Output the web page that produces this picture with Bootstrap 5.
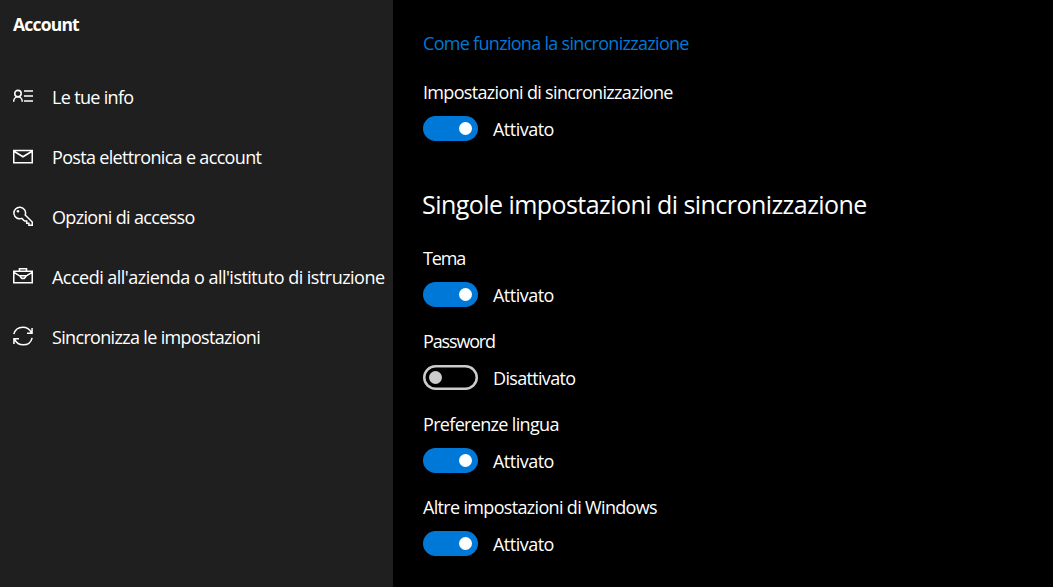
<!DOCTYPE html>
<html lang="it">
<head>
    <meta charset="UTF-8">
    <meta name="viewport" content="width=device-width, initial-scale=1.0">
    <title>Account - Sincronizza le impostazioni</title>
    <link rel="stylesheet" href="https://cdn.jsdelivr.net/npm/bootstrap@5.3.0/dist/css/bootstrap.min.css">
    <style>
        body {
            background-color: #000;
            color: #fff;
            font-family: "Segoe UI", "Open Sans", "Noto Sans", sans-serif;
            font-size: 18px;
            line-height: 24px;
            letter-spacing: -0.67px;
        }
        .sidebar {
            width: 393px;
            background-color: #1f1f1f;
            padding: 12px 0 0 13px;
        }
        .sidebar-title {
            font-size: 17.5px;
            line-height: 24px;
            font-weight: 700;
            letter-spacing: -0.8px;
            margin-bottom: 31px;
        }
        .side-link {
            height: 60px;
            color: #fff;
            gap: 19px;
        }
        .side-link svg {
            width: 20px;
            height: 20px;
            margin-top: -2px;
            fill: none;
            stroke: #fff;
            stroke-width: 1.6;
        }
        .content {
            padding: 31px 0 0 30px;
        }
        .help-link {
            color: #0078d7;
            letter-spacing: -0.7px;
            margin-bottom: 25px;
        }
        .section-title {
            font-size: 25px;
            line-height: 32px;
            letter-spacing: -0.55px;
            margin: 47px 0 26px -1px;
        }
        .setting + .setting {
            margin-top: 22px;
        }
        .setting-row {
            height: 25px;
            margin-top: 12px;
            gap: 15px;
        }
        .switch {
            width: 55px;
            height: 25px;
            padding: 0 6px;
            background-color: #0078d7;
        }
        .switch .knob {
            width: 13px;
            height: 13px;
            background-color: #fff;
        }
        .switch.off {
            background-color: transparent;
            box-shadow: inset 0 0 0 2.5px #ccc;
        }
        .switch.off .knob {
            background-color: #ccc;
        }
        .spacing-wide {
            letter-spacing: -0.52px;
        }
        .spacing-tight {
            letter-spacing: -1.15px;
        }
    </style>
</head>
<body>
    <div class="d-flex vh-100 overflow-hidden">
        <nav class="sidebar flex-shrink-0">
            <h1 class="sidebar-title"><span>Account</span></h1>
            <a href="#" class="side-link d-flex align-items-center text-decoration-none text-nowrap">
                <svg viewBox="0 0 21 21" class="flex-shrink-0"><circle cx="5.2" cy="8" r="3.4"/><path d="M.7 16.6c0-3 2-5.200 4.500-5.200s4.500 2.200 4.500 5.200M11.500 5.200h9.500M11.500 10.400h9.500M11.500 15.700h9.500"/></svg>
                <span>Le tue info</span>
            </a>
            <a href="#" class="side-link d-flex align-items-center text-decoration-none text-nowrap">
                <svg viewBox="0 0 21 21" class="flex-shrink-0"><path d="M.8 4.800h19.400v12.700H.8zM1 5.500l9.500 5.800L20 5.500"/></svg>
                <span>Posta elettronica e account</span>
            </a>
            <a href="#" class="side-link d-flex align-items-center text-decoration-none text-nowrap">
                <svg viewBox="0 0 21 21" class="flex-shrink-0"><path d="M12.800 9.400l7.400 7.400v3.500h-3.500v-2.300h-2.300v-2.300h-2.300l-2.800-2.700A6.100 6.100 0 1 1 12.800 9.400z"/><circle cx="5.200" cy="5.500" r="1.300" fill="#fff" stroke="none"/></svg>
                <span>Opzioni di accesso</span>
            </a>
            <a href="#" class="side-link d-flex align-items-center text-decoration-none text-nowrap">
                <svg viewBox="0 0 21 21" class="flex-shrink-0"><path d="M.8 5.500h19.400v12H.8zM6.800 5.200V2.900h7.400v2.300M1 6.700l6.800 4.300M20 6.700L13.200 11M7.800 10.200h5.400v1.300l-1.500 1.500H9.300l-1.500-1.500z"/></svg>
                <span class="spacing-wide">Accedi all'azienda o all'istituto di istruzione</span>
            </a>
            <a href="#" class="side-link d-flex align-items-center text-decoration-none text-nowrap">
                <svg viewBox="0 0 21 21" class="flex-shrink-0"><path d="M.9 8.600C2 4 5.800 1.200 10.300 1.200c4 0 7.300 2.200 9 5.800M20 2.200v5.300h-5.300M20.100 12.400c-1.100 4.600-4.900 7.400-9.400 7.400-4 0-7.300-2.200-9-5.800M1 18.800v-5.300h5.300"/></svg>
                <span>Sincronizza le impostazioni</span>
            </a>
        </nav>

        <main class="content flex-grow-1">
            <div class="help-link"><span>Come funziona la sincronizzazione</span></div>
            <div class="setting">
                <div><span>Impostazioni di sincronizzazione</span></div>
                <div class="setting-row d-flex align-items-center">
                    <div class="switch rounded-pill d-flex align-items-center justify-content-end"><div class="knob rounded-circle"></div></div>
                    <span class="spacing-wide">Attivato</span>
                </div>
            </div>

            <h2 class="section-title fw-normal"><span>Singole impostazioni di sincronizzazione</span></h2>
            <div class="setting">
                <div><span class="spacing-tight">Tema</span></div>
                <div class="setting-row d-flex align-items-center">
                    <div class="switch rounded-pill d-flex align-items-center justify-content-end"><div class="knob rounded-circle"></div></div>
                    <span class="spacing-wide">Attivato</span>
                </div>
            </div>
            <div class="setting">
                <div><span class="spacing-tight">Password</span></div>
                <div class="setting-row d-flex align-items-center">
                    <div class="switch off rounded-pill d-flex align-items-center"><div class="knob rounded-circle"></div></div>
                    <span>Disattivato</span>
                </div>
            </div>
            <div class="setting">
                <div><span>Preferenze lingua</span></div>
                <div class="setting-row d-flex align-items-center">
                    <div class="switch rounded-pill d-flex align-items-center justify-content-end"><div class="knob rounded-circle"></div></div>
                    <span class="spacing-wide">Attivato</span>
                </div>
            </div>
            <div class="setting">
                <div><span>Altre impostazioni di Windows</span></div>
                <div class="setting-row d-flex align-items-center">
                    <div class="switch rounded-pill d-flex align-items-center justify-content-end"><div class="knob rounded-circle"></div></div>
                    <span class="spacing-wide">Attivato</span>
                </div>
            </div>
        </main>
    </div>
    <script src="https://cdn.jsdelivr.net/npm/bootstrap@5.3.0/dist/js/bootstrap.bundle.min.js"></script>
</body>
</html>
